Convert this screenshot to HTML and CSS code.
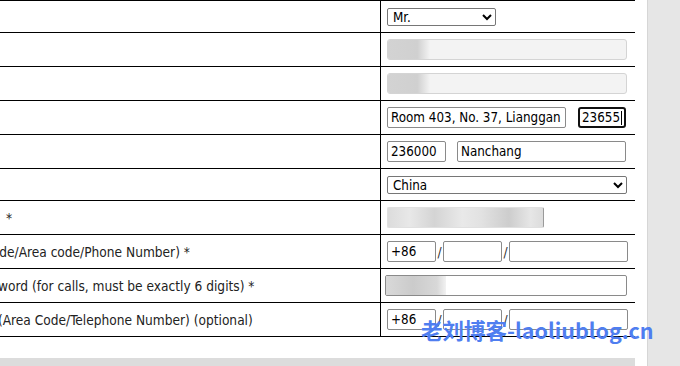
FILE: index.html
```html
<!DOCTYPE html>
<html lang="en">
<head>
    <meta charset="UTF-8">
    <title>Customer Details</title>
    <link rel="stylesheet" href="styles.css">
</head>
<body>
<div class="page">
    <div class="main">
        <div class="form-table">
            <div class="row short">
                <div class="label">Title *</div>
                <div class="cell">
                    <select class="sel-title"><option>Mr.</option><option>Mrs.</option></select>
                </div>
            </div>
            <div class="row">
                <div class="label">First name *</div>
                <div class="cell"><div class="field disabled full"><span class="blur"></span></div></div>
            </div>
            <div class="row">
                <div class="label">Last name *</div>
                <div class="cell"><div class="field disabled full"><span class="blur"></span></div></div>
            </div>
            <div class="row">
                <div class="label">Street / No. *</div>
                <div class="cell">
                    <input type="text" class="txt street" value="Room 403, No. 37, Lianggan">
                    <span class="focus-wrap"><input type="text" class="txt houseno" value="23655"></span>
                </div>
            </div>
            <div class="row">
                <div class="label">Postcode / City *</div>
                <div class="cell">
                    <input type="text" class="txt zip" value="236000">
                    <input type="text" class="txt city" value="Nanchang">
                </div>
            </div>
            <div class="row short">
                <div class="label">Country *</div>
                <div class="cell">
                    <select class="sel-country"><option>China</option></select>
                </div>
            </div>
            <div class="row">
                <div class="label">Email address for contact  *</div>
                <div class="cell"><div class="field mail"></div></div>
            </div>
            <div class="row">
                <div class="label">Mobile Phone (Country code/Area code/Phone Number) *</div>
                <div class="cell">
                    <input type="text" class="txt cc" value="+86"><span class="slash">/</span><input type="text" class="txt area" value=""><span class="slash">/</span><input type="text" class="txt num" value="">
                </div>
            </div>
            <div class="row">
                <div class="label">Telephone Customer Password (for calls, must be exactly 6 digits) *</div>
                <div class="cell"><div class="field pass"><span class="blur wide"></span></div></div>
            </div>
            <div class="row">
                <div class="label">Fax Number for Business (Area Code/Telephone Number) (optional)</div>
                <div class="cell">
                    <input type="text" class="txt cc" value="+86"><span class="slash">/</span><input type="text" class="txt area" value=""><span class="slash">/</span><input type="text" class="txt num" value="">
                </div>
            </div>
        </div>
        <div class="footer-bar"></div>
    </div>
    <div class="sidebar"></div>
</div>
<div class="watermark">老刘博客-laoliublog.cn</div>
</body>
</html>
```

FILE: styles.css
```css
body{
margin:0;
background-color:white;
font-family:"DejaVu Sans Condensed","DejaVu Sans","Noto Sans",sans-serif;
font-size:13.6px;
color:#222;
}

.page{
display:flex;
height:366px;
overflow:hidden;
}

.main{
width:635px;
overflow:hidden;
flex:none;
}

.sidebar{
flex:1;
margin-left:12px;
background-color:#e6e6e6;
border-left:1px solid #d6d6d6;
}

.form-table{
margin-left:-162px;
width:797px;
border-top:1px solid #000;
}

.row{
display:flex;
height:33px;
border-bottom:1px solid #000;
}

.row.short{
height:31px;
}

.label{
width:543px;
flex:none;
box-sizing:border-box;
padding-left:4px;
border-right:1px solid #000;
display:flex;
align-items:center;
white-space:pre;
}

.cell{
flex:1;
display:flex;
align-items:center;
padding-left:6px;
}

input.txt, select, .field{
box-sizing:border-box;
height:21px;
font-family:inherit;
font-size:13.3px;
color:#000;
border:1px solid #8a8a8a;
border-radius:2px;
padding:0 1px 0 3px;
margin:0;
background-color:white;
outline:none;
}

select{
height:18px;
padding:0 1px;
border-color:#767676;
}

.sel-title{ width:109px; }
.sel-country{ width:240px; }

.field{
display:flex;
overflow:hidden;
padding:0;
}

.field.full{ width:240px; }

.field.disabled{
background-color:#f3f3f3;
border-color:#d4d4d4;
border-radius:3px;
}

.blur{
width:42px;
height:100%;
background:linear-gradient(to right,#d3d3d3 0%,#d0d0d0 70%,#f3f3f3 100%);
}

.field.mail{
width:157px;
border-color:#e0e0e0;
border-right-color:#9a9a9a;
background:linear-gradient(to right,#dcdcdc 0%,#e8e8e8 14%,#d4d4d4 30%,#e9e9e9 48%,#e2e2e2 60%,#cdcdcd 78%,#e6e6e6 92%,#dcdcdc 100%);
}

.field.pass{
width:242px;
margin-left:-2px;
border-color:#8a8a8a;
}

.blur.wide{
width:60px;
background:linear-gradient(to right,#d9d9d9 0%,#cbcbcb 45%,#d8d8d8 85%,#f2f2f2 100%);
}

input.street{ width:179px; }

.focus-wrap{
position:relative;
margin-left:12px;
}

.focus-wrap::after{
content:"";
position:absolute;
left:43px;
top:4px;
width:1px;
height:14px;
background-color:#000;
}

input.houseno{
width:48px;
border:2px solid #111;
border-radius:3px;
padding:0 2px;
}

input.zip{ width:59px; }
input.city{ width:169px; margin-left:11px; }

input.cc{ width:49px; }
input.area{ width:59px; }
input.num{ width:119px; }

.slash{
width:7px;
text-align:center;
color:#333;
}

.footer-bar{
margin-top:21px;
height:9px;
background-color:#dcdcdc;
}

.watermark{
position:absolute;
left:421px;
top:314px;
font-family:"Noto Sans CJK SC",sans-serif;
font-weight:bold;
font-size:21.5px;
color:#4f7ef0;
white-space:nowrap;
}
```
